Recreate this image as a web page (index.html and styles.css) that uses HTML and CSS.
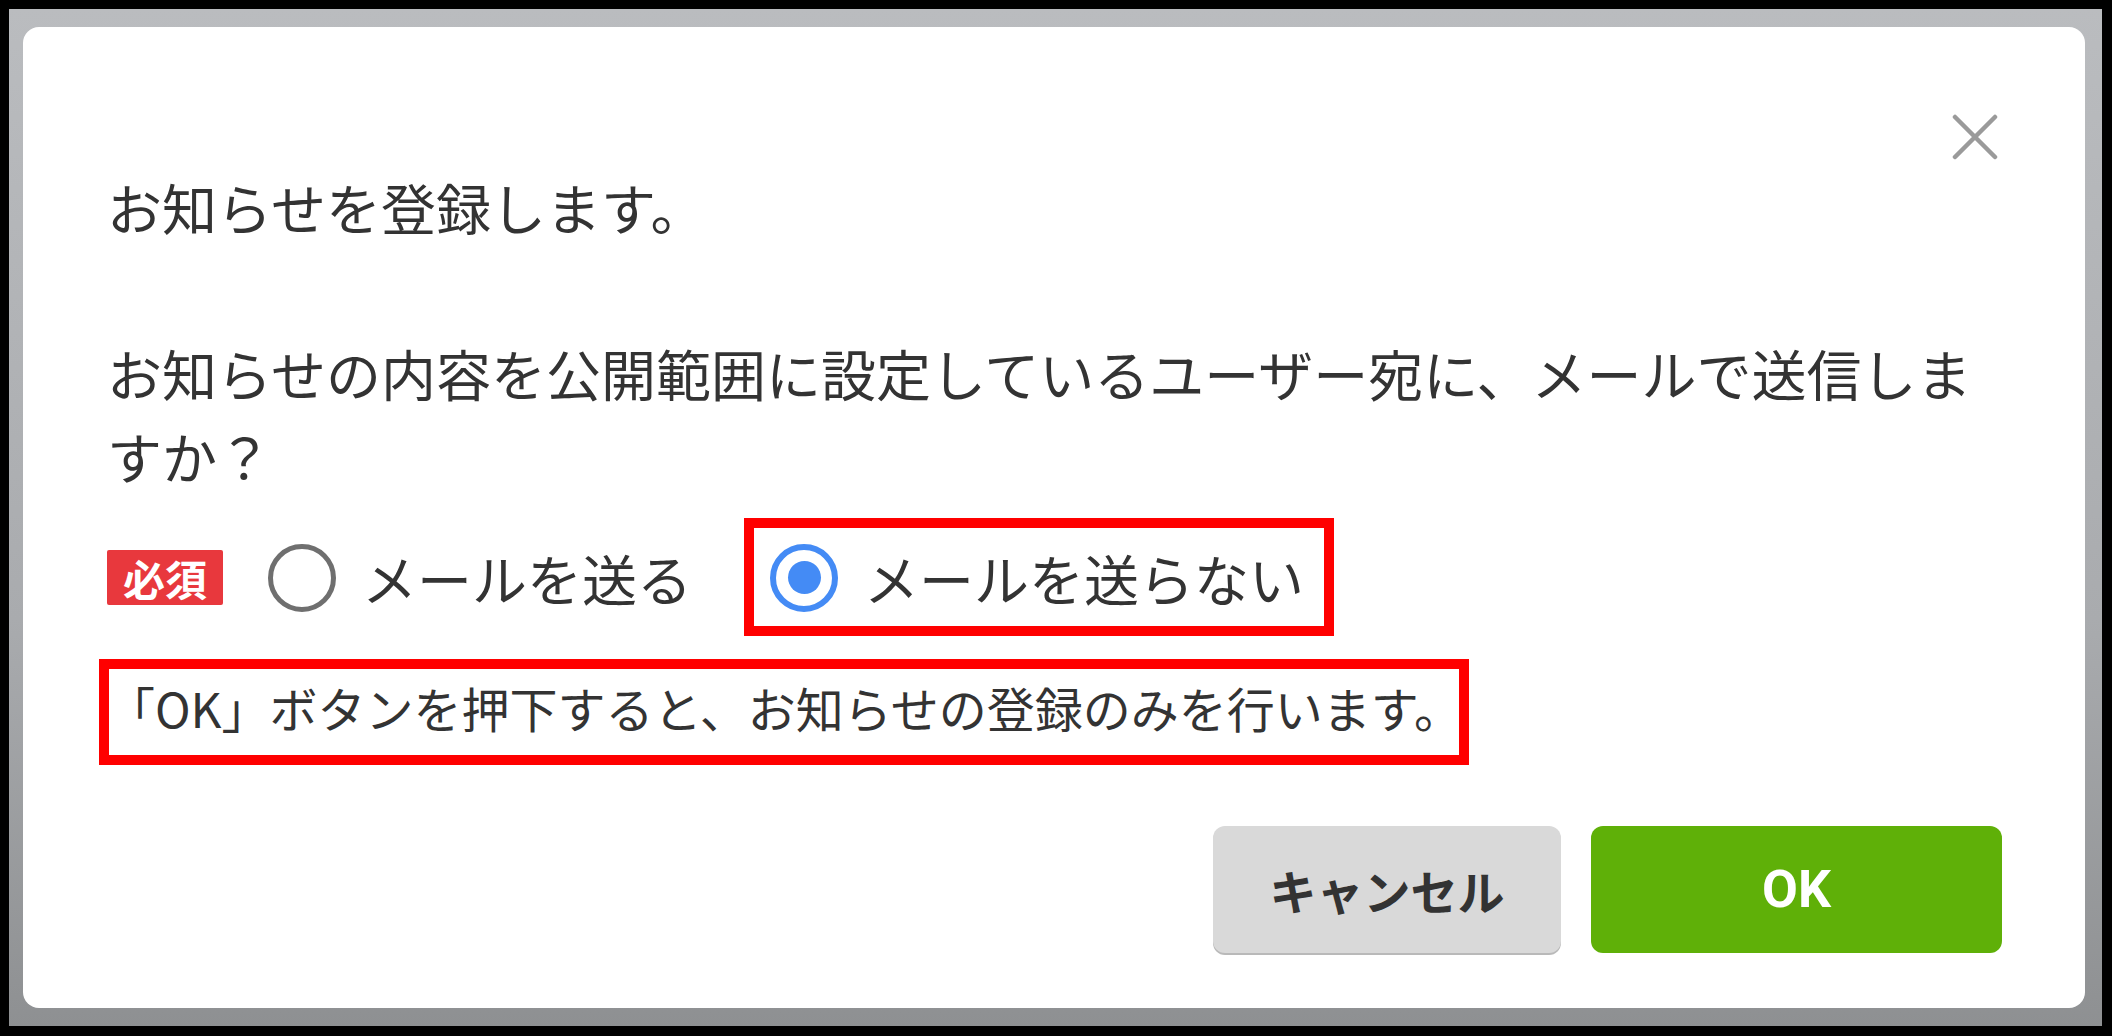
FILE: index.html
```html
<!DOCTYPE html>
<html lang="ja">
<head>
    <meta charset="UTF-8">
    <meta name="viewport" content="width=device-width, initial-scale=1.0">
    <title>お知らせ登録</title>
    <link rel="stylesheet" href="styles.css">
</head>
<body>
    <div class="frame">
        <div class="backdrop">
            <div class="dialog">
                <div class="dialog-header">
                    <button class="close-btn" type="button" aria-label="閉じる">
                        <svg width="46" height="48" viewBox="0 0 46 48">
                            <path d="M3 4 L43 44 M43 4 L3 44" stroke="#9a9a9a" stroke-width="4.5" stroke-linecap="round"/>
                        </svg>
                    </button>
                </div>
                <div class="dialog-body">
                    <p class="message first">お知らせを登録します。</p>
                    <p class="message">お知らせの内容を公開範囲に設定しているユーザー宛に、メールで送信しますか？</p>
                    <div class="choice-row">
                        <span class="badge">必須</span>
                        <label class="choice">
                            <input type="radio" name="sendMail" value="send">
                            <span>メールを送る</span>
                        </label>
                        <label class="choice marked">
                            <input type="radio" name="sendMail" value="nosend" checked>
                            <span>メールを送らない</span>
                        </label>
                    </div>
                    <p class="note marked">「OK」ボタンを押下すると、お知らせの登録のみを行います。</p>
                </div>
                <div class="dialog-footer">
                    <button class="btn btn-cancel" type="button">キャンセル</button>
                    <button class="btn btn-ok" type="button">OK</button>
                </div>
            </div>
        </div>
    </div>
</body>
</html>
```

FILE: styles.css
```css
* {
    margin: 0;
    padding: 0;
    box-sizing: border-box;
}
:root {
    --text-color: #333333;
    --font: "Noto Sans CJK JP", sans-serif;
    --mark-color: #ff0000;
    --radio-blue: #448bf5;
    --radio-gray: #6f6f6f;
}
html,
body {
    width: 2112px;
    height: 1036px;
    overflow: hidden;
    background-color: #000000;
}
.frame {
    width: 2112px;
    height: 1036px;
    padding: 9px 10px 10px 9px;
}
.backdrop {
    height: 100%;
    padding: 18px 17px 18px 14px;
    background: linear-gradient(to bottom, #babcbf 0%, #a9abae 60%, #8e9092 100%);
}
.dialog {
    height: 100%;
    background-color: #ffffff;
    border-radius: 16px;
    padding: 0 83px 0 84px;
    font-family: var(--font);
    color: var(--text-color);
    display: flex;
    flex-direction: column;
}
.dialog-header {
    height: 138px;
    padding-top: 86px;
    display: flex;
    justify-content: flex-end;
}
.close-btn {
    width: 46px;
    height: 48px;
    margin-right: 4px;
    border: none;
    background: none;
    display: flex;
}
.message {
    font-size: 55px;
    line-height: 83px;
}
.message.first {
    margin-bottom: 83px;
}
.choice-row {
    margin-top: 39px;
    height: 83px;
    display: flex;
    align-items: center;
}
.badge {
    display: inline-block;
    width: 116px;
    height: 55px;
    line-height: 55px;
    text-align: center;
    background-color: #e8383d;
    color: #ffffff;
    font-size: 42px;
    font-weight: bold;
    border-radius: 2px;
    margin-right: 45px;
}
.choice {
    display: flex;
    align-items: center;
    font-size: 55px;
    line-height: 83px;
}
.choice + .choice {
    margin-left: 78px;
}
.choice input {
    appearance: none;
    -webkit-appearance: none;
    width: 68px;
    height: 68px;
    border-radius: 50%;
    border: 5px solid var(--radio-gray);
    background-color: #ffffff;
    margin-right: 26px;
    display: flex;
    align-items: center;
    justify-content: center;
}
.choice input:checked {
    border: 6px solid var(--radio-blue);
}
.choice input:checked::before {
    content: "";
    width: 33px;
    height: 33px;
    border-radius: 50%;
    background-color: var(--radio-blue);
}
.note {
    display: inline-block;
    margin-top: 51px;
    font-size: 48px;
    line-height: 74px;
}
/* red annotation boxes drawn over the screenshot */
.marked {
    position: relative;
}
.marked::after {
    content: "";
    position: absolute;
    border: 10px solid var(--mark-color);
    pointer-events: none;
}
.choice.marked::after {
    top: -18px;
    bottom: -17px;
    left: -26px;
    right: -30px;
}
.note.marked::after {
    top: -11px;
    bottom: -21px;
    left: -8px;
    right: -7px;
}
.dialog-footer {
    margin-top: auto;
    margin-bottom: 55px;
    display: flex;
    justify-content: flex-end;
    gap: 30px;
}
.btn {
    height: 127px;
    border: none;
    border-radius: 12px;
    font-family: "Roboto", "Noto Sans CJK JP", sans-serif;
    font-weight: bold;
    font-size: 47px;
}
.btn-cancel {
    width: 348px;
    background-color: #d9d9d9;
    color: var(--text-color);
    box-shadow: 0 2px 0 #b9b9b9;
}
.btn-ok {
    width: 411px;
    background-color: #5fb008;
    color: #ffffff;
    font-size: 52px;
}
```
